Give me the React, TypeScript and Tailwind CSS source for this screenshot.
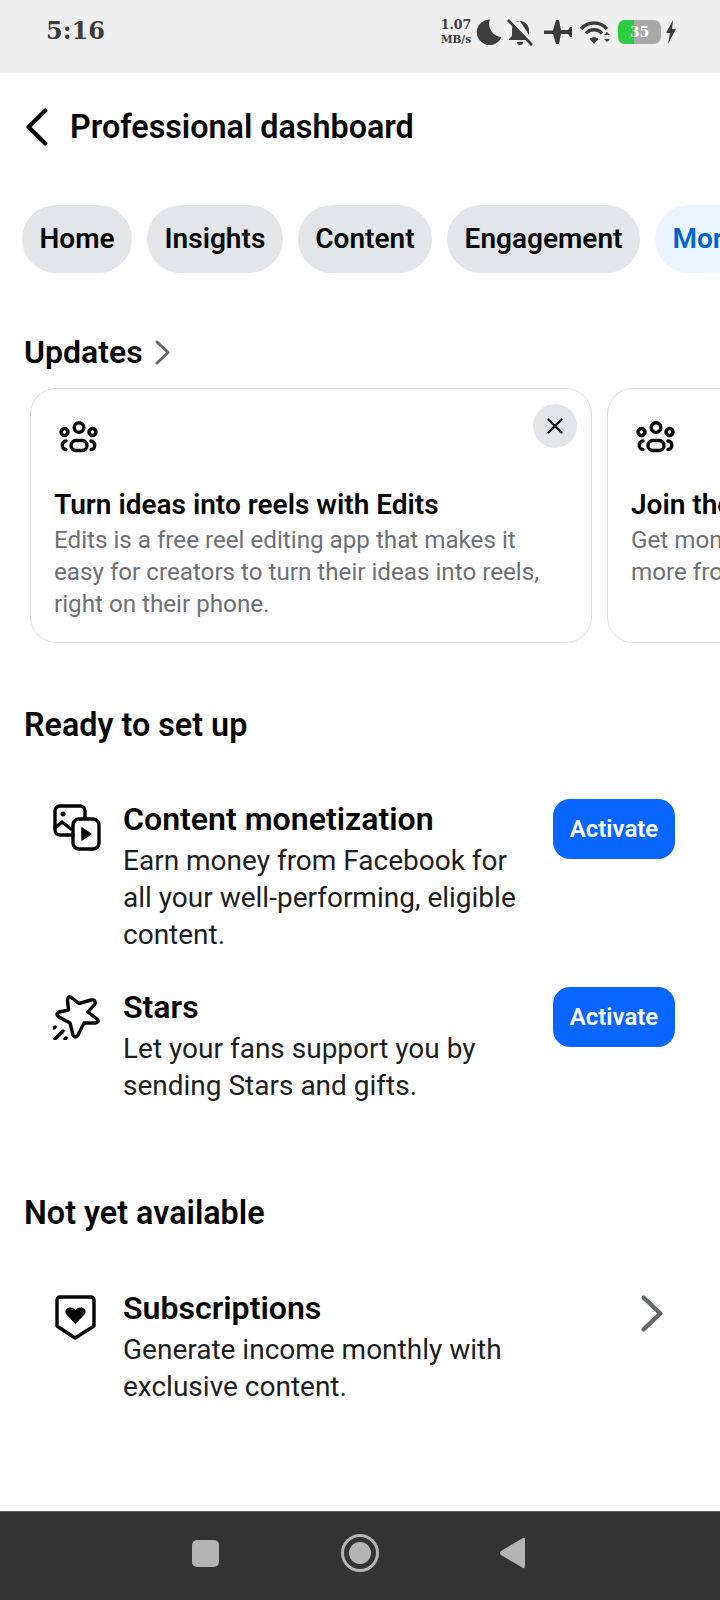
import { X } from "lucide-react";

function Chevron({ dir, className, color, width, height, stroke }: { dir: "left" | "right"; className?: string; color: string; width: number; height: number; stroke: number }) {
    const s = stroke / 2 + 0.5;
    const d =
        dir === "left"
            ? `M${width - s} ${s} L${s} ${height / 2} L${width - s} ${height - s}`
            : `M${s} ${s} L${width - s} ${height / 2} L${s} ${height - s}`;
    return (
        <svg width={width} height={height} viewBox={`0 0 ${width} ${height}`} fill="none" stroke={color} strokeWidth={stroke} strokeLinecap="round" strokeLinejoin="round" className={className}>
            <path d={d} />
        </svg>
    );
}

function StatusIcons() {
    return (
        <div className="flex items-center text-[#3c3c3c]">
            <div className="flex w-[34px] flex-col items-center font-['DejaVu_Serif',serif] text-[12.5px] font-bold leading-[15px]">
                <span>1.07</span>
                <span className="text-[10.5px]">MB/s</span>
            </div>
            <svg width="26" height="26" viewBox="0 0 26 26" className="ml-[3px]" fill="#3c3c3c">
                <path d="M14 0.5 A12.8 12.8 0 1 0 25.5 18 A13 13 0 0 1 14 0.5 Z" />
            </svg>
            <svg width="27" height="28" viewBox="0 0 27 28" className="ml-[5px]" fill="#3c3c3c">
                <path d="M13 3 C7 3 5 8 5 12 V18 L2 21 V22 H20 L7 5 Z M22 17 V12 C22 7 18 3 13 3 Z" />
                <path d="M10 24 H16 A3 3 0 0 1 10 24 Z" />
                <path d="M3 0 L26 25" stroke="#efefef" strokeWidth="4" />
                <path d="M1 2 L25 27" stroke="#3c3c3c" strokeWidth="2.6" />
            </svg>
            <svg width="28" height="24" viewBox="0 0 28 24" className="ml-[10px]" fill="#3c3c3c">
                <path d="M0 10.5 H9 L12 0 H15 L17 10 H24 L26 7 H28 V17 H26 L24 14 H17 L15 24 H12 L9 14 H0 Z" />
            </svg>
            <svg width="31" height="24" viewBox="0 0 31 24" className="ml-[8px]" fill="none" stroke="#3c3c3c" strokeWidth="3.4">
                <path d="M1 9 C8 1 20 1 27 9" />
                <path d="M6 13.5 C10 8.5 18 8.5 22 13.5" />
                <path d="M9.5 19 L14 24 L18.5 19 C16 16.5 12 16.5 9.5 19 Z" fill="#3c3c3c" stroke="none" />
                <path d="M24 15 L27 12 L30 15 Z M24 19 L27 22 L30 19 Z" fill="#3c3c3c" stroke="none" />
            </svg>
            <div className="relative ml-[7px] h-[24px] w-[43px] overflow-hidden rounded-[7px] bg-[#a9a9a9]">
                <div className="h-full w-[16px] bg-[#2ecc40]" />
                <span className="absolute inset-0 flex items-center justify-center font-['DejaVu_Serif',serif] text-[14px] font-bold text-white">
                    35
                </span>
            </div>
            <svg width="12" height="24" viewBox="0 0 12 24" className="ml-[4px]" fill="#3c3c3c">
                <path d="M8 0 L1 13 H5 L3 24 L11 9 H7 Z" />
            </svg>
        </div>
    );
}

function GroupIcon() {
    return (
        <svg width="40" height="34" viewBox="0 0 40 34" fill="none" stroke="#050505" strokeWidth="3.4" strokeLinecap="round">
            <circle cx="20" cy="6.5" r="4.8" />
            <circle cx="5.5" cy="11" r="3.5" />
            <circle cx="33.5" cy="11" r="3.5" />
            <rect x="12" y="19.500" width="16" height="10" rx="5" />
            <path d="M7 20 C2 20 2 28.500 7 28.500" />
            <path d="M32 20 C37 20 37 28.500 32 28.500" />
        </svg>
    );
}

function UpdateCard({ title, body, close }: { title: string; body: string[]; close?: boolean }) {
    return (
        <div className="relative h-[255px] w-[562px] shrink-0 rounded-[26px] border border-[#dcdee1] bg-white pl-[23px]">
            <div className="ml-[5px] mt-[32px] h-[34px]">
                <GroupIcon />
            </div>
            <h3 className="mt-[31px] whitespace-nowrap text-[28px] font-semibold leading-[38px] text-[#050505]">{title}</h3>
            <div className="whitespace-nowrap text-[24.2px] leading-[32px] text-[#6d7074]">
                {body.map((line) => (
                    <p key={line}>{line}</p>
                ))}
            </div>
            {close && (
                <button className="absolute right-[14px] top-[15px] flex h-[44px] w-[44px] items-center justify-center rounded-full bg-[#e2e5e9]">
                    <X size={26} strokeWidth={2.2} color="#050505" />
                </button>
            )}
        </div>
    );
}

function SetupRow({
    icon,
    title,
    lines,
    action,
}: {
    icon: React.ReactNode;
    title: string;
    lines: string[];
    action: React.ReactNode;
}) {
    return (
        <div className="flex pl-[53px] pr-[45px]">
            <div className="w-[70px] shrink-0 pt-[5px]">{icon}</div>
            <div className="flex-1">
                <h3 className="text-[32.1px] font-semibold leading-[40px] text-[#050505]">{title}</h3>
                <div className="mt-[3px] whitespace-nowrap text-[28px] leading-[37px] text-[#1c1e21]">
                    {lines.map((line) => (
                        <p key={line}>{line}</p>
                    ))}
                </div>
            </div>
            {action}
        </div>
    );
}

function ActivateButton() {
    return (
        <button className="h-[60px] w-[122px] shrink-0 rounded-[17px] bg-[#0866ff] text-[24px] font-semibold text-white">
            Activate
        </button>
    );
}

export default function App() {
    const tabs = ["Home", "Insights", "Content", "Engagement"];

    return (
        <div className="flex h-[1600px] w-[720px] flex-col overflow-hidden bg-white font-['Roboto',sans-serif]">
            {/* status bar */}
            <div className="flex h-[73px] shrink-0 items-start justify-between bg-[#efefef] pl-[46px] pr-[43px] pt-[17px]">
                <span className="pt-[1px] font-['DejaVu_Serif',serif] text-[24px] font-bold leading-[26px] text-[#3c3c3c]">5:16</span>
                <StatusIcons />
            </div>

            {/* header */}
            <div className="flex h-[108px] shrink-0 items-center pl-[26px]">
                <Chevron dir="left" width={22} height={38} stroke={4.2} color="#050505" />
                <h1 className="ml-[22px] text-[32.3px] font-semibold text-[#050505]">Professional dashboard</h1>
            </div>

            {/* tabs */}
            <div className="mt-[24px] flex shrink-0 gap-[15px] overflow-hidden pl-[22px]">
                {tabs.map((tab) => (
                    <div key={tab} className="flex h-[68px] shrink-0 items-center rounded-full bg-[#e2e5e9] px-[17.5px] text-[28px] font-semibold text-[#050505]">
                        {tab}
                    </div>
                ))}
                <div className="flex h-[68px] shrink-0 items-center rounded-full bg-[#ebf5ff] px-[17.5px] text-[28px] font-semibold text-[#0064d1]">
                    More
                </div>
            </div>

            {/* updates */}
            <div className="mt-[59px] flex h-[40px] shrink-0 items-center pl-[24px]">
                <h2 className="text-[32px] font-semibold text-[#050505]">Updates</h2>
                <Chevron dir="right" width={15} height={25} stroke={3} color="#65686c" className="ml-[12px]" />
            </div>
            <div className="mt-[16px] flex shrink-0 gap-[15px] overflow-hidden pl-[30px]">
                <UpdateCard
                    close
                    title="Turn ideas into reels with Edits"
                    body={[
                        "Edits is a free reel editing app that makes it",
                        "easy for creators to turn their ideas into reels,",
                        "right on their phone.",
                    ]}
                />
                <UpdateCard title="Join the" body={["Get money", "more from"]} />
            </div>

            {/* ready to set up */}
            <h2 className="mt-[62px] shrink-0 pl-[24px] text-[32.3px] font-semibold leading-[40px] text-[#050505]">Ready to set up</h2>
            <div className="mt-[54px] flex shrink-0 flex-col gap-[34px]">
                <SetupRow
                    icon={
                        <svg width="48" height="48" viewBox="0 0 48 48" fill="none" stroke="#050505" strokeWidth="3.4" strokeLinejoin="round" strokeLinecap="round">
                            <path d="M20 31 H7 A5 5 0 0 1 2 26 V7 A5 5 0 0 1 7 2 H27 A5 5 0 0 1 32 7 V14" />
                            <path d="M2 24 L9 18 L18 25" />
                            <circle cx="10" cy="10" r="2.5" fill="#050505" stroke="none" />
                            <rect x="20" y="15" width="26" height="30" rx="6" />
                            <path d="M29 24 L38 30 L29 36 Z" fill="#050505" strokeWidth="1.5" />
                        </svg>
                    }
                    title="Content monetization"
                    lines={["Earn money from Facebook for", "all your well-performing, eligible", "content."]}
                    action={<ActivateButton />}
                />
                <SetupRow
                    icon={
                        <svg width="48" height="48" viewBox="0 0 48 48" fill="none" stroke="#050505" strokeWidth="3.4" strokeLinejoin="round" strokeLinecap="round">
                            <path d="M14.5 8 Q15 3 19 6 L26 11.500 L38 8 Q43 7 42 12 L35 20 L44 27 Q47 30 42 31 L31 31 L25 43 Q22 47 20 43 L17 31 L6 25 Q2 22 6 20 L15.500 18 Z" />
                            <path d="M1 36 L2 35 M2 47 L10 39 M12 47 L13 46" />
                        </svg>
                    }
                    title="Stars"
                    lines={["Let your fans support you by", "sending Stars and gifts."]}
                    action={<ActivateButton />}
                />
            </div>

            {/* not yet available */}
            <h2 className="mt-[89px] shrink-0 pl-[24px] text-[32.3px] font-semibold leading-[40px] text-[#050505]">Not yet available</h2>
            <div className="mt-[55px] shrink-0">
                <SetupRow
                    icon={
                        <svg width="44" height="48" viewBox="0 0 44 48" fill="none" stroke="#050505" strokeWidth="3.4" strokeLinejoin="round" className="ml-[1px]">
                            <path d="M6 4 H37 A3 3 0 0 1 40 7 V33 L21 45 L3 33 V7 A3 3 0 0 1 6 4 Z" />
                            <path d="M21.5 31 L12 21 C9 15 18 12 21.5 17 C25 12 34 15 31 21 Z" fill="#050505" stroke="none" />
                        </svg>
                    }
                    title="Subscriptions"
                    lines={["Generate income monthly with", "exclusive content."]}
                    action={<Chevron dir="right" width={22} height={37} stroke={4.2} color="#65686c" className="mr-[12px] mt-[7px]" />}
                />
            </div>

            {/* nav bar */}
            <div className="mt-auto flex h-[89px] shrink-0 items-center border-t border-[#555] bg-[#333333] pb-[6px]">
                <div className="ml-[192px] h-[27px] w-[27px] rounded-[5px] bg-[#b4b4b4]" />
                <div className="ml-[122px] flex h-[38px] w-[38px] items-center justify-center rounded-full border-[3px] border-[#b4b4b4]">
                    <div className="h-[22px] w-[22px] rounded-full bg-[#b4b4b4]" />
                </div>
                <svg width="27" height="32" viewBox="0 0 27 32" className="ml-[120px]" fill="#b4b4b4">
                    <path d="M24 1 Q26 0 26 3 V29 Q26 32 24 31 L2 18 Q0 16 2 14 Z" />
                </svg>
            </div>
        </div>
    );
}
